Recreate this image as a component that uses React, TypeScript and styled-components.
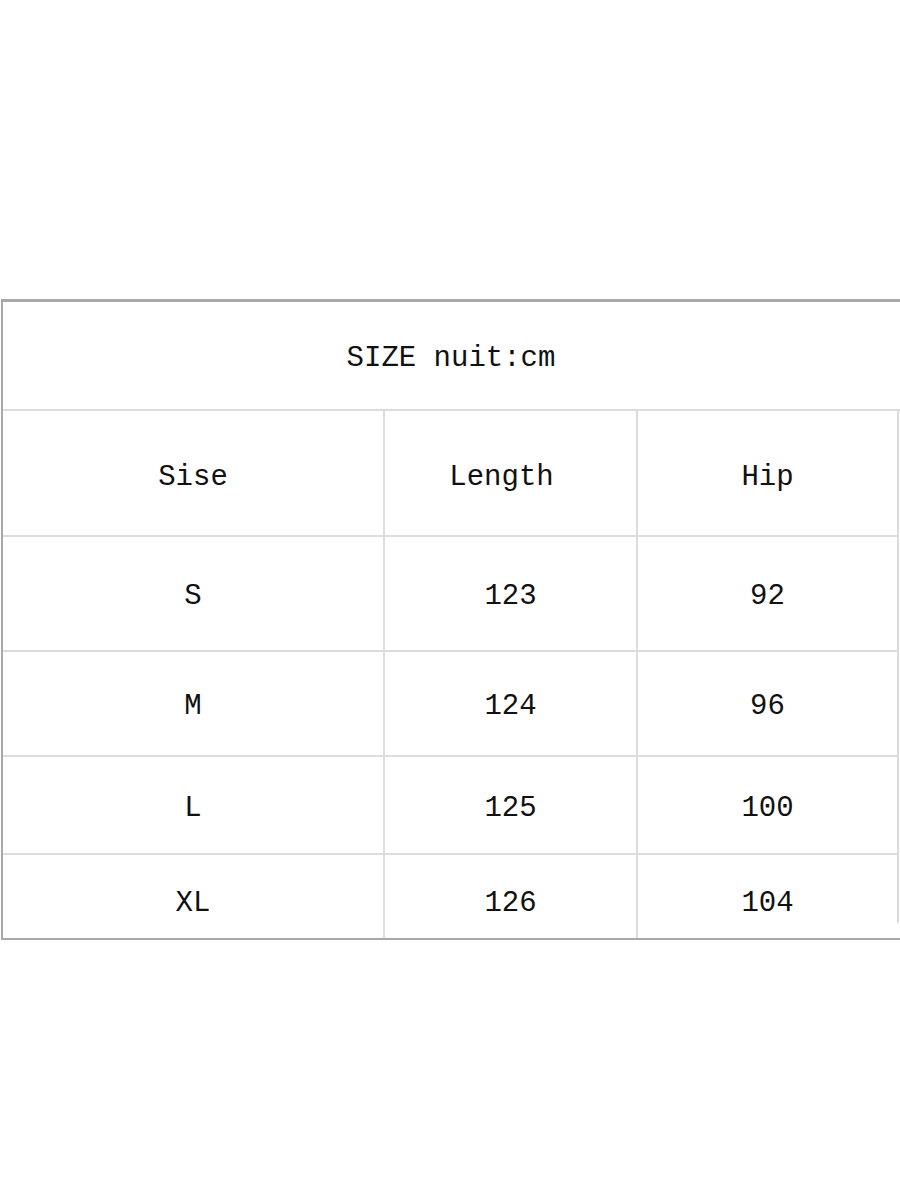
import React from "react";
import styled, { createGlobalStyle } from "styled-components";

const Global = createGlobalStyle`
  html, body { margin: 0; padding: 0; background: #ffffff; }
  body { overflow: hidden; width: 900px; height: 1200px; }
`;

const Page = styled.div`
  width: 900px;
  height: 1200px;
  padding-top: 299px;
  box-sizing: border-box;
  overflow: hidden;
`;

const Table = styled.div`
  margin-left: 1px;
  width: 940px;
  display: flex;
  flex-direction: column;
  border-top: 3px solid #a8a8a8;
  border-left: 2px solid #a8a8a8;
  border-bottom: 2px solid #a8a8a8;
  font-family: "Liberation Mono", "Noto Sans CJK SC", monospace;
  font-size: 29px;
  color: #111111;
`;

const Title = styled.div`
  border-bottom: 2px solid #dcdcdc;
  width: 896px;
  display: flex;
  align-items: center;
  justify-content: center;
  padding-top: 6px;
  padding-right: 4px;
  height: 101px;
`;

const Row = styled.div<{ $h: number; $last?: boolean; $shift?: number }>`
  display: grid;
  grid-template-columns: 382px 253px 261px;
  height: ${(p) => p.$h}px;
  border-bottom: ${(p) => (p.$last ? "none" : "2px solid #dcdcdc")};
  width: 896px;
  & > div {
    padding-top: ${(p) => p.$shift ?? 6}px;
  }
`;

const Cell = styled.div<{ $pr?: number; $cut?: boolean }>`
  position: relative;
  display: flex;
  align-items: center;
  justify-content: center;
  border-right: 2px solid #dcdcdc;
  box-sizing: border-box;
  height: 100%;
  padding-right: ${(p) => p.$pr ?? 0}px;
  ${(p) =>
    p.$cut
      ? `border-right-color: transparent;
  &::after {
    content: "";
    position: absolute;
    right: -2px;
    top: 0;
    width: 2px;
    height: 68px;
    background: #dcdcdc;
  }`
      : ""}
`;

const rows: { h: number; c: [string, string, string]; shift?: number }[] = [
  { h: 124, c: ["Sise", "Length", "Hip"], shift: 8 },
  { h: 113, c: ["S", "123", "92"] },
  { h: 103, c: ["M", "124", "96"] },
  { h: 96, c: ["L", "125", "100"] },
  { h: 83, c: ["XL", "126", "104"], shift: 14 },
];

export default function App() {
  return (
    <>
      <Global />
      <Page>
        <Table>
          <Title>SIZE nuit:cm</Title>
          {rows.map((r, i) => {
            const last = i === rows.length - 1;
            return (
              <Row key={i} $h={r.h} $last={last} $shift={r.shift}>
                {r.c.map((t, j) => (
                  <Cell
                    key={j}
                    $pr={i === 0 && j === 1 ? 18 : 0}
                    $cut={last && j === 2}
                  >
                    {t}
                  </Cell>
                ))}
              </Row>
            );
          })}
        </Table>
      </Page>
    </>
  );
}
